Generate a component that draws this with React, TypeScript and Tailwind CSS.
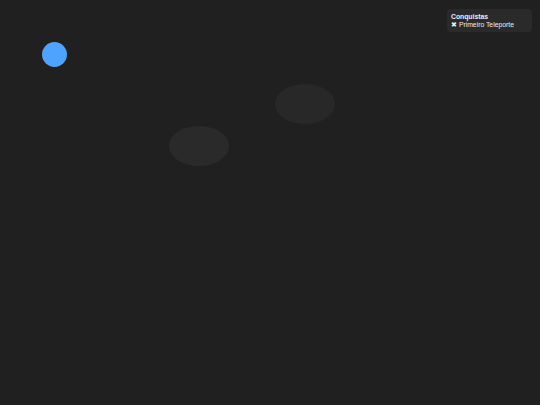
export default function App() {
  return (
    <div
      className="relative h-screen w-full overflow-hidden bg-[#202020]"
      style={{ fontFamily: '"Liberation Sans", Arial, sans-serif' }}
    >
      {/* player */}
      <div className="absolute left-[42px] top-[42px] h-[25px] w-[25px] rounded-full bg-[#4da3ff]" />

      {/* portals */}
      <div className="absolute left-[275px] top-[84px] h-[40px] w-[60px] rounded-[50%] bg-[#282828]" />
      <div className="absolute left-[169px] top-[126px] h-[40px] w-[60px] rounded-[50%] bg-[#2a2a2a]" />

      {/* achievements */}
      <div className="absolute right-[8px] top-[9px] w-[85px] rounded-[4px] bg-[#2a2a2a] px-[4px] py-[3.5px] text-[6.8px] leading-[8px] text-[#eeeeee]">
        <div className="font-bold">Conquistas</div>
        <div>✖ Primeiro Teleporte</div>
      </div>
    </div>
  );
}
